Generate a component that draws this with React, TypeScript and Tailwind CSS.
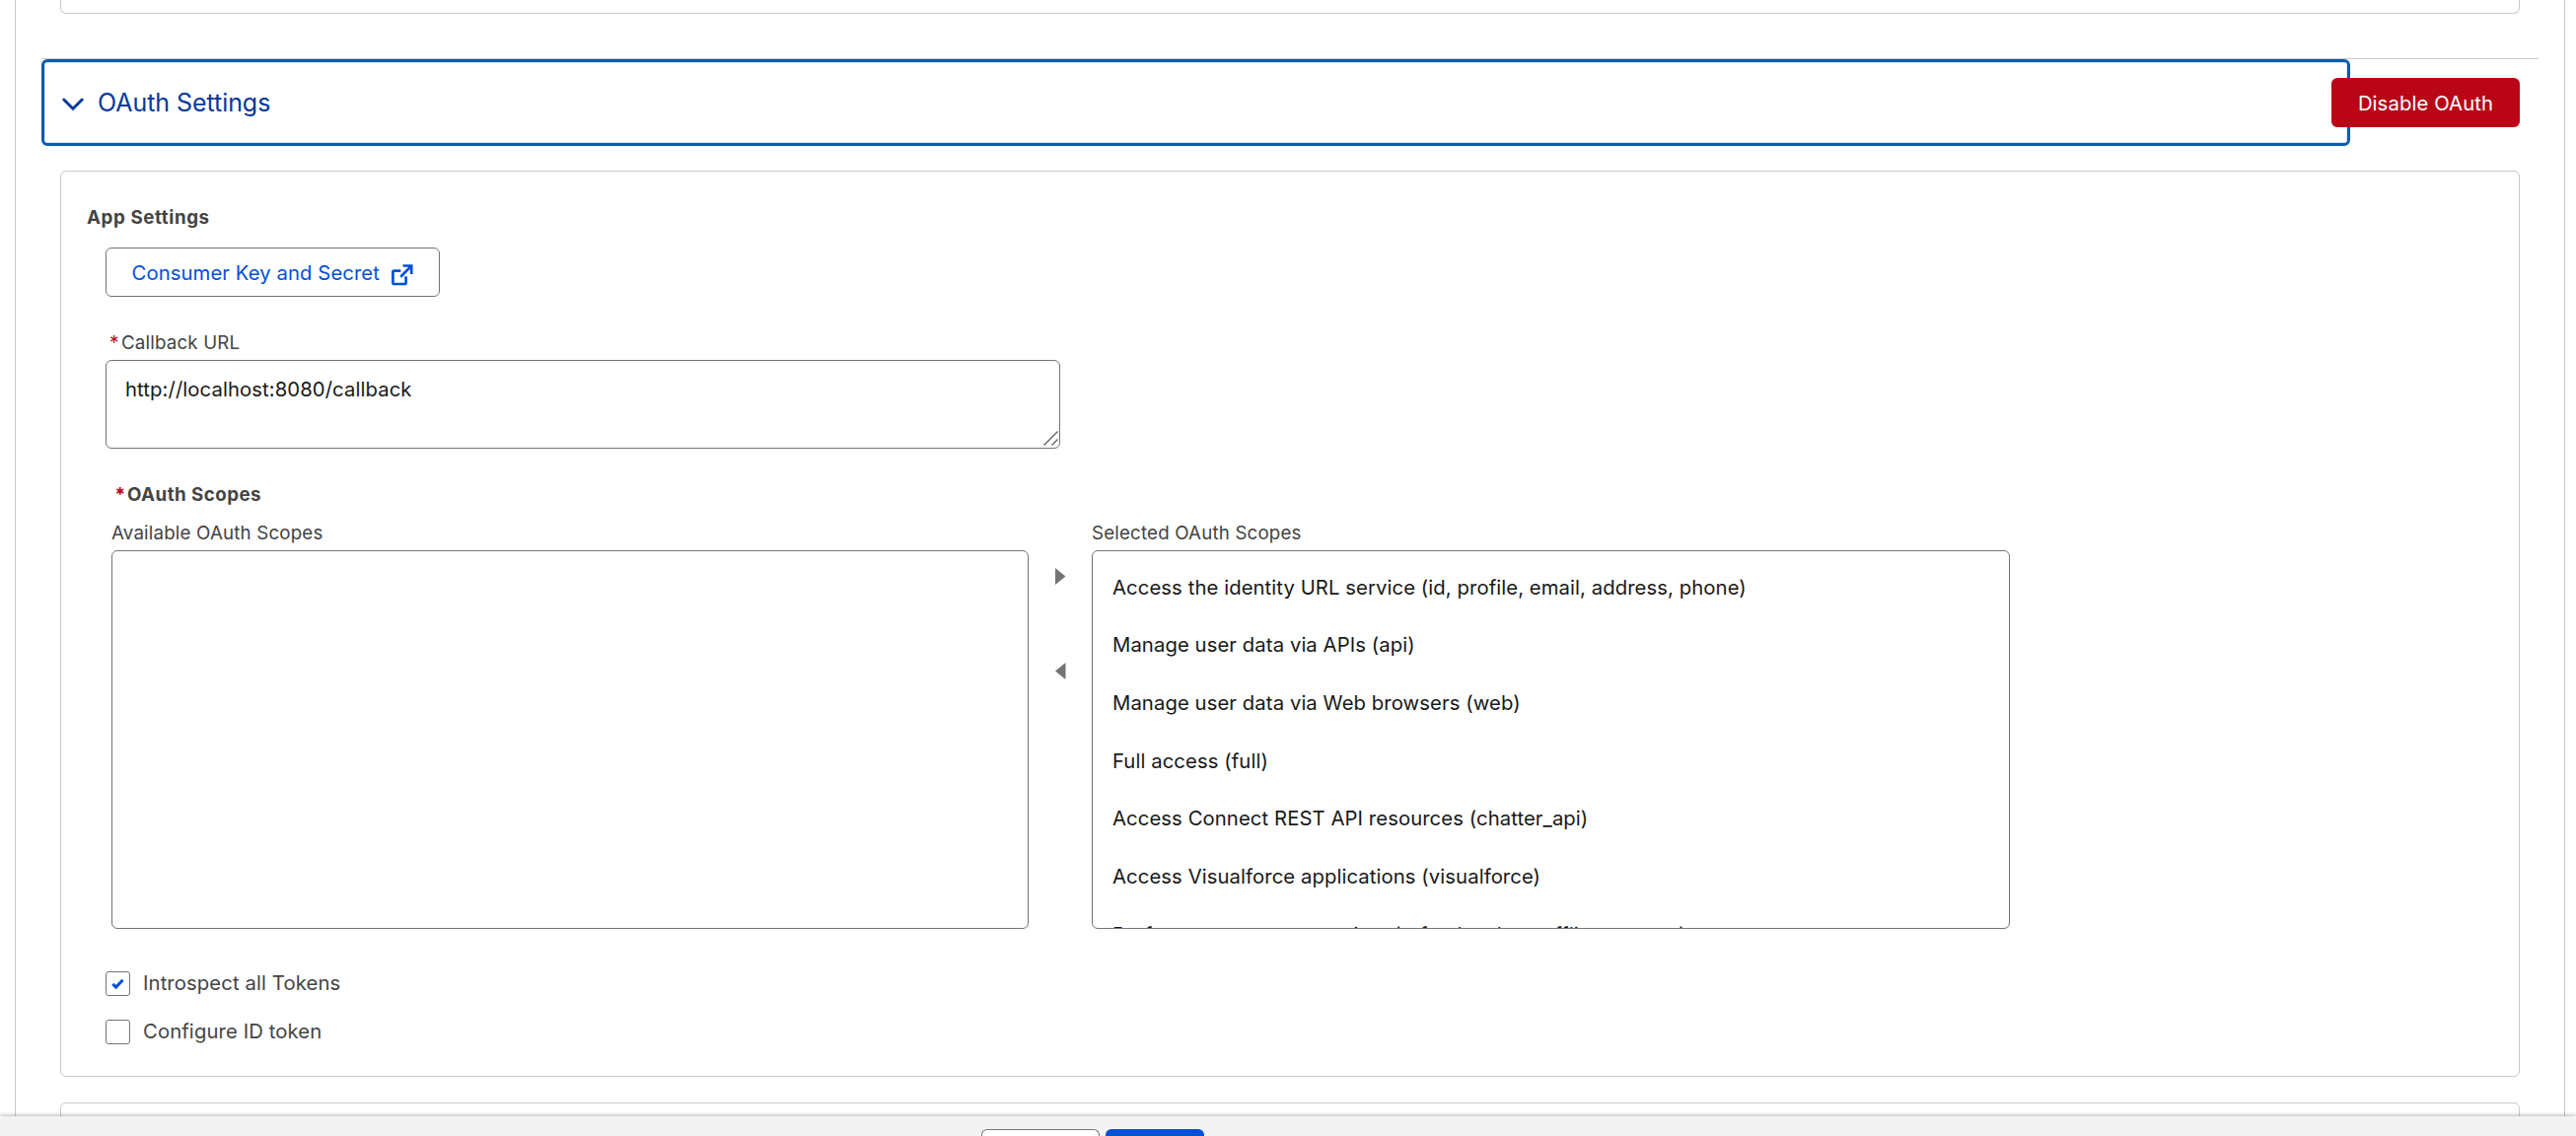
import clsx from "clsx"

const selectedScopes = [
  "Access the identity URL service (id, profile, email, address, phone)",
  "Manage user data via APIs (api)",
  "Manage user data via Web browsers (web)",
  "Full access (full)",
  "Access Connect REST API resources (chatter_api)",
  "Access Visualforce applications (visualforce)",
  "Perform requests at any time (refresh_token, offline_access)",
]

const tokenOptions = [
  { label: "Introspect all Tokens", checked: true },
  { label: "Configure ID token", checked: false },
]

function ChevronDown() {
  return (
    <svg width="22" height="14" viewBox="0 0 22 14" fill="none" className="mt-[3px] shrink-0">
      <path d="M1.8 2 L11 11.2 L20.2 2" stroke="#03399b" strokeWidth="3" strokeLinecap="round" strokeLinejoin="miter" />
    </svg>
  )
}

function ExternalLink() {
  return (
    <svg width="22" height="22" viewBox="0 0 22 22" fill="none" stroke="#0250d9" className="shrink-0">
      <path d="M9.3 6.6 H2.6 Q1.4 6.6 1.4 7.8 V18.8 Q1.4 20 2.6 20 H13.4 Q14.6 20 14.6 18.8 V12.2" strokeWidth="2.7" />
      <path d="M11.6 1.5 H20.2 V10" strokeWidth="2.7" />
      <path d="M9.2 12.8 L19.4 2.4" strokeWidth="2.7" />
    </svg>
  )
}

function Check() {
  return (
    <svg width="13" height="12" viewBox="0 0 13 12" fill="none">
      <path d="M1.3 5.9 L4.6 9.1 L11.6 1.7" stroke="#0250d9" strokeWidth="3.1" />
    </svg>
  )
}

function ScopeBox({ title, scopes, className }: { title: string; scopes: string[]; className: string }) {
  return (
    <div className={className}>
      <p className="pt-px text-[18.75px] leading-6 tracking-[0.16px] text-[#444444]">{title}</p>
      <ul className="mt-[5px] h-[384px] overflow-hidden rounded-[6px] border border-[#747474] bg-white pt-[7.6px]">
        {scopes.map((scope) => (
          <li key={scope} className="flex h-[58.67px] items-center pl-5 text-[20.3px] tracking-[0.08px] text-[#181818]">
            {scope}
          </li>
        ))}
      </ul>
    </div>
  )
}

export default function App() {
  return (
    <div className="flex h-[1152px] flex-col overflow-hidden bg-white font-[Inter,sans-serif]">
      <main className="mx-[15px] mr-[11px] min-h-0 flex-1 overflow-hidden border-x border-[#c9c9c9] px-[26px]">
        <div className="mx-[19px] h-3.5 rounded-b-[6px] border border-t-0 border-[#c9c9c9]" />

        <header className="mt-[45px] flex h-[90px] items-start border-t border-[#c9c9c9]">
          <button className="flex h-[88px] w-[2341px] items-center rounded-[6px] border-[3px] border-[#0b5cab] pl-[18px] text-left shadow-[inset_0_0_0_1px_#d8e6fe]">
            <ChevronDown />
            <span className="mt-px ml-[14px] text-[25px] tracking-[-0.05px] text-[#03399b]">OAuth Settings</span>
          </button>
          <button className="relative mt-[19px] -ml-[19px] h-[50px] w-[191px] rounded-[6px] bg-[#ba0517] pt-0.5 text-[20.3px] tracking-[0.1px] text-white">
            Disable OAuth
          </button>
        </header>

        <section className="mx-[19px] mt-6 h-[919px] rounded-[6px] border border-[#c9c9c9] pt-[35px] pl-[26px]">
          <h3 className="text-[18.75px] leading-6 font-bold tracking-[0.58px] text-[#444444]">App Settings</h3>

          <div className="pl-[19px]">
            <button className="mt-[18px] flex h-[50px] w-[339px] items-center rounded-[6px] border border-[#747474] pt-0.5 pl-[25.5px] text-[20.3px] tracking-[0.08px] text-[#0250d9]">
              Consumer Key and Secret
              <span className="mt-[3px] ml-[12.5px]">
                <ExternalLink />
              </span>
            </button>

            <label className="mt-[35px] flex pl-1 text-[18.75px] leading-6 tracking-[0.16px] text-[#444444]">
              <span className="w-3 text-[19px] text-[#ba0517]">*</span>
              Callback URL
            </label>
            <div className="relative mt-[5px] h-[90px] w-[968px] rounded-[6px] border border-[#747474] px-[19px] pt-[14px] text-[20.3px] leading-[30px] tracking-[0.09px] text-[#181818]">
              http://localhost:8080/callback
              <svg className="absolute right-px bottom-0.5" width="15" height="15" viewBox="0 0 15 15" stroke="#5c5c5c" strokeWidth="1.3">
                <path d="M0.5 14.5 L14.5 0.5 M8.5 14.5 L14.5 8.5" />
              </svg>
            </div>

            <h4 className="mt-[35px] flex pl-[9.5px] text-[18.75px] leading-6 font-bold tracking-[0.45px] text-[#444444]">
              <span className="w-[12.5px] text-[19px] text-[#ba0517]">*</span>
              OAuth Scopes
            </h4>

            <div className="mt-3.5 flex pl-1.5">
              <ScopeBox title="Available OAuth Scopes" scopes={[]} className="w-[930px]" />
              <div className="flex w-16 flex-col items-center gap-[79px] pt-12">
                <svg width="11" height="17" viewBox="0 0 11 17" fill="#747474">
                  <path d="M0 0 L10.5 8.5 L0 17 Z" />
                </svg>
                <svg width="11" height="17" viewBox="0 0 11 17" fill="#747474">
                  <path d="M10.5 0 L0 8.5 L10.5 17 Z" />
                </svg>
              </div>
              <ScopeBox title="Selected OAuth Scopes" scopes={selectedScopes} className="w-[931px]" />
            </div>

            <div className="mt-[43px] flex flex-col gap-6">
              {tokenOptions.map((option) => (
                <label key={option.label} className="flex h-[25px] items-center gap-[13px] text-[20.3px] tracking-[0.1px] text-[#444444]">
                  <span
                    className={clsx(
                      "flex size-[25px] items-center justify-center rounded-[3px] border border-[#747474]",
                      option.checked && "pt-px",
                    )}
                  >
                    {option.checked && <Check />}
                  </span>
                  {option.label}
                </label>
              ))}
            </div>
          </div>
        </section>

        <div className="mx-[19px] mt-[26px] h-10 rounded-t-[6px] border border-[#c9c9c9]" />
      </main>

      <footer className="relative flex h-5 shrink-0 justify-center gap-1.5 overflow-visible bg-[#f3f3f3] pt-[13px] pr-[396px] shadow-[0_-2px_3px_rgba(0,0,0,0.2)]">
        <div className="h-[7px] w-[120px] rounded-t-[6px] border border-b-0 border-[#747474] bg-white" />
        <div className="h-[7px] w-[100px] rounded-t-[6px] bg-[#0250d9]" />
      </footer>
    </div>
  )
}
